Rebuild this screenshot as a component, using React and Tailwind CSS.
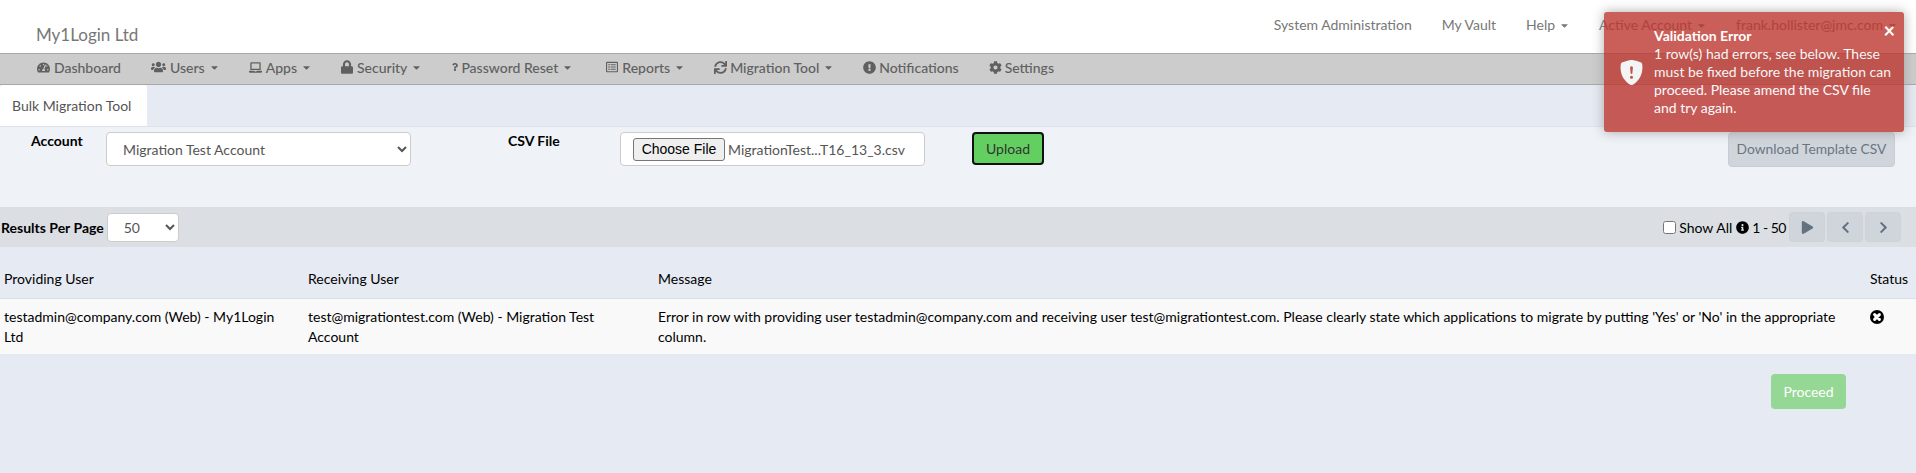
import React from 'react';
import {
  FaTachometerAlt, FaUsers, FaLaptop, FaLock, FaQuestion, FaRegListAlt, FaSync,
  FaExclamationCircle, FaCog, FaCaretDown, FaPlay, FaChevronLeft, FaChevronRight,
  FaInfoCircle,
} from 'react-icons/fa';
import { BsShieldFillExclamation } from 'react-icons/bs';

const menu = [
  { label: 'Dashboard', icon: FaTachometerAlt, size: 'h-[13px] w-[13px] mr-[4px]' },
  { label: 'Users', icon: FaUsers, size: 'h-[14px] w-[15px] mr-[4px]', caret: true },
  { label: 'Apps', icon: FaLaptop, size: 'h-[13px] w-[13px] mr-[4px]', caret: true },
  { label: 'Security', icon: FaLock, size: 'h-[14px] w-[12px] mr-[4px]', caret: true },
  { label: 'Password Reset', icon: FaQuestion, size: 'h-[10px] w-[6px] ml-[1px] mr-[3px]', caret: true },
  { label: 'Reports', icon: FaRegListAlt, size: 'h-[14px] w-[12px] ml-[4px] mr-[4px]', caret: true },
  { label: 'Migration Tool', icon: FaSync, size: 'h-[13px] w-[13px] mr-[3px]', caret: true },
  { label: 'Notifications', icon: FaExclamationCircle, size: 'h-[13px] w-[13px] mr-[3px]' },
  { label: 'Settings', icon: FaCog, size: 'h-[13px] w-[13px] mr-[3px]' },
];

const Caret = () => <FaCaretDown className="ml-[4px] mr-[-1px] h-[11px] w-[11px]" />;

export default function App() {
  return (
    <div className="relative h-[473px] overflow-hidden bg-[#e6eaf2] font-['Lato','Noto_Sans',sans-serif] text-[14px] text-black">
      {/* Top bar */}
      <header className="flex h-[54px] items-start justify-between border-b border-[#a8a8a8] bg-white">
        <div className="ml-[36px] mt-[24px] text-[17px] leading-[22px] text-[#777]">My1Login Ltd</div>
        <nav className="mr-[19px] mt-[15px] flex gap-[30px] leading-[20px] text-[#777]">
          <span>System Administration</span>
          <span>My Vault</span>
          <span className="flex items-center">Help<Caret /></span>
          <span className="flex items-center">Active Account<Caret /></span>
          <span className="flex items-center">frank.hollister@jmc.com<Caret /></span>
        </nav>
      </header>

      {/* Main menu */}
      <nav className="flex h-[31px] items-center gap-[30px] border-b border-[#a8a8a8] bg-[#cccccc] pb-[4px] pl-[37px] font-medium text-[#606060]">
        {menu.map((item) => {
          const Icon = item.icon;
          return (
            <span key={item.label} className="flex items-center">
              <Icon className={item.size} />
              {item.label}
              {item.caret && <Caret />}
            </span>
          );
        })}
      </nav>

      {/* Tabs */}
      <div className="flex h-[42px] items-end border-b border-[#dde1e8]">
        <div className="flex h-[41px] w-[147px] items-center rounded-t-[3px] bg-white pl-[12px] text-[#555]">
          Bulk Migration Tool
        </div>
      </div>

      {/* Upload form */}
      <form className="flex h-[80px] items-start bg-[#eff2f7] pt-[5px]">
        <label className="w-[106px] pl-[31px] font-bold leading-[18px]">Account</label>
        <select defaultValue="a" className="h-[34px] w-[305px] rounded-[4px] border border-[#ccc] bg-white pl-[12px] text-[#555]">
          <option value="a">Migration Test Account</option>
        </select>
        <label className="ml-[97px] w-[112px] font-bold leading-[18px]">CSV File</label>
        <div className="flex h-[34px] w-[305px] items-center rounded-[4px] border border-[#ccc] bg-white pl-[12px] text-[#555]">
          <button type="button" className="h-[23px] w-[92px] rounded-[3px] border border-[#767676] bg-[#efefef] font-['Liberation_Sans',sans-serif] text-[14px] text-black">
            Choose File
          </button>
          <span className="ml-[3px]">MigrationTest...T16_13_3.csv</span>
        </div>
        <button type="button" className="ml-[47px] h-[33px] w-[72px] rounded-[4px] border-2 border-[#111] bg-[#62cf60] text-[#333]">
          Upload
        </button>
        <button type="button" className="ml-auto mr-[21px] h-[35px] w-[167px] rounded-[4px] border border-[#c8cdd4] bg-[#d0d5dc] text-[13.8px] text-[#6a7580]">
          Download Template CSV
        </button>
      </form>

      {/* Paging bar */}
      <div className="flex h-[40px] items-center bg-[#dbdfe3] pl-[1px] pr-[15px]">
        <span className="font-bold">Results Per Page</span>
        <select defaultValue="50" className="ml-[3px] h-[29px] w-[72px] rounded-[4px] border border-[#ccc] bg-white pl-[12px] text-[#555]">
          <option value="50">50</option>
        </select>
        <div className="ml-auto flex items-center">
          <input type="checkbox" className="mr-[3px] h-[13px] w-[13px]" />
          <span>Show All</span>
          <FaInfoCircle className="ml-[4px] h-[13px] w-[13px]" />
          <span className="ml-[3px] mr-[3px] tracking-[-0.5px]">1 - 50</span>
          <div className="flex gap-[2px]">
            {[FaPlay, FaChevronLeft, FaChevronRight].map((Icon, i) => (
              <button key={i} type="button" className="flex h-[30px] w-[36px] items-center justify-center rounded-[4px] border border-[#cdd2d9] bg-[#d0d5dc] text-[#64717e]">
                <Icon className="h-[13px] w-[13px]" />
              </button>
            ))}
          </div>
        </div>
      </div>

      {/* Results */}
      <table className="mt-[17px] w-full table-fixed border-collapse">
        <colgroup>
          <col className="w-[305px]" />
          <col className="w-[350px]" />
          <col />
          <col className="w-[49px]" />
        </colgroup>
        <thead>
          <tr className="border-b border-[#dcdfe4] text-left">
            <th className="h-[34px] pb-[4px] pl-[4px] pr-[3px] font-normal">Providing User</th>
            <th className="px-[3px] pb-[4px] font-normal">Receiving User</th>
            <th className="px-[3px] pb-[4px] font-normal">Message</th>
            <th className="px-[3px] pb-[4px] font-normal">Status</th>
          </tr>
        </thead>
        <tbody>
          <tr className="h-[56px] bg-[#f9f9f9] align-top leading-[20px]">
            <td className="pl-[4px] pr-[20px] pt-[8px]">testadmin@company.com (Web) - My1Login Ltd</td>
            <td className="pl-[3px] pr-[20px] pt-[8px]">test@migrationtest.com (Web) - Migration Test Account</td>
            <td className="px-[3px] pt-[8px]">
              Error in row with providing user testadmin@company.com and receiving user test@migrationtest.com. Please clearly state which applications to migrate by putting 'Yes' or 'No' in the appropriate column.
            </td>
            <td className="px-[3px] pt-[11px]">
              <svg viewBox="0 0 14 14" className="h-[14px] w-[14px]">
                <circle cx="7" cy="7" r="7" fill="#000" />
                <path d="M4.6 4.6l4.8 4.8M9.4 4.6l-4.8 4.8" stroke="#fff" strokeWidth="3" strokeLinecap="round" />
              </svg>
            </td>
          </tr>
        </tbody>
      </table>

      <div className="mt-[20px] flex justify-end pr-[70px]">
        <button type="button" className="h-[35px] w-[75px] rounded-[4px] bg-[#95d895] text-white">Proceed</button>
      </div>

      {/* Toast */}
      <div className="absolute left-[1604px] top-[12px] flex h-[120px] w-[300px] items-center rounded-[3px] bg-[#bd362f] text-white opacity-80 shadow-[0_0_12px_#999]">
        <BsShieldFillExclamation className="ml-[15px] h-[25px] w-[25px] shrink-0" />
        <div className="ml-[10px] w-[240px] leading-[18px]">
          <div className="font-bold">Validation Error</div>
          1 row(s) had errors, see below. These must be fixed before the migration can proceed. Please amend the CSV file and try again.
        </div>
        <span className="absolute right-[9px] top-[8px] text-[20px] font-bold leading-[20px]">×</span>
      </div>
    </div>
  );
}
